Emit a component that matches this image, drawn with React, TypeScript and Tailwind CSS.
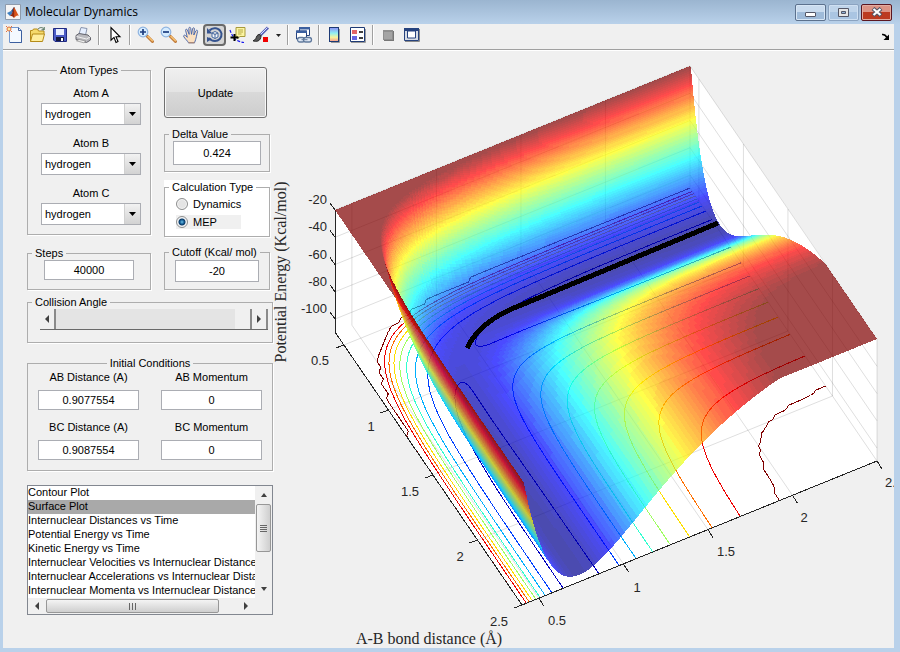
import type { ReactNode } from "react";

type Point = [number, number];

/* ---------- potential energy surface ---------- */

const R_MIN = 0.4;
const R_MAX = 2.5;
const V_MIN = -109.5;
const CUTOFF = -20;
const WELL = 104.5;
const SATO = 0.18;

// LEPS energy (kcal/mol) of the collinear H + H2 system
const energy = (a: number, b: number) => {
   const [p, q, r] = [a, b, a + b].map(dist => {
      const x = Math.exp(-1.96 * (dist - 0.738));
      const f = WELL / (4 * (1 + SATO));
      return {
         q: f * ((3 + SATO) * x * x - (2 + 6 * SATO) * x),
         j: f * ((1 + 3 * SATO) * x * x - (6 + 2 * SATO) * x),
      };
   });
   const exchange = Math.sqrt(
      0.5 * ((p.j - q.j) ** 2 + (q.j - r.j) ** 2 + (r.j - p.j) ** 2)
   );
   return Math.min(CUTOFF, p.q + q.q + r.q - exchange);
};

const project = (a: number, b: number, v: number): Point => {
   const s = (a - R_MIN) / (R_MAX - R_MIN);
   const t = (b - R_MIN) / (R_MAX - R_MIN);
   const h = (v - V_MIN) / (CUTOFF - V_MIN);
   return [335 + 187 * s + 355 * t, 332 + 273 * s - 144 * t - 122 * h];
};

const fmt = ([x, y]: Point) => `${x.toFixed(2)} ${y.toFixed(2)}`;

const jet = (v: number) => {
   const level = Math.max(0, Math.round(((v + WELL) / (CUTOFF + WELL)) * 63));
   const x = (level + 1) / 64;
   const channel = (center: number) =>
      Math.round(255 * Math.min(1, Math.max(0, 1.5 - Math.abs(4 * x - center))));
   return `rgb(${channel(3)},${channel(2)},${channel(1)})`;
};

const range = (from: number, to: number, count: number) =>
   Array.from({ length: count }, (_, i) => from + ((to - from) * i) / count);

interface Cell {
   d: string;
   fill: string;
   back: boolean;
}

const buildSurface = () => {
   // the repulsive walls are steep, so they get a finer mesh
   const grid = [
      ...range(R_MIN, 0.56, 80),
      ...range(0.56, 0.8, 40),
      ...range(0.8, R_MAX, 90),
      R_MAX,
   ];
   const v = grid.map(a => grid.map(b => energy(a, b)));
   const last = grid.length - 1;
   const cells: Cell[] = [];
   const at = (i: number, j: number) => project(grid[i], grid[j], v[i][j]);

   for (let i = 0; i < last; i++) {
      const color = (j: number) =>
         jet((v[i][j] + v[i + 1][j] + v[i][j - 1] + v[i + 1][j - 1]) / 4);
      // a cell seen from below has its winding reversed on screen
      const isBack = (j: number) => {
         const p = at(i, j);
         const q = at(i + 1, j - 1);
         const r = at(i, j - 1);
         const s = at(i + 1, j);
         return (q[0] - p[0]) * (s[1] - r[1]) - (q[1] - p[1]) * (s[0] - r[0]) > 0;
      };
      let j = last;
      while (j > 0) {
         const fill = color(j);
         const back = isBack(j);
         let k = j - 1;
         while (k > 0 && color(k) === fill && isBack(k) === back) k--;
         const top: string[] = [];
         const bottom: string[] = [];
         for (let m = j; m >= k; m--) {
            top.push(fmt(at(i, m)));
            bottom.unshift(fmt(at(i + 1, m)));
         }
         cells.push({ d: `M${[...top, ...bottom].join("L")}Z`, fill, back });
         j = k;
      }
   }
   return cells;
};

const buildContour = (level: number) => {
   const grid = [...range(R_MIN, R_MAX, 84), R_MAX];
   const v = grid.map(a => grid.map(b => energy(a, b)));
   let d = "";
   for (let i = 0; i < grid.length - 1; i++) {
      for (let j = 0; j < grid.length - 1; j++) {
         const corners = [
            [i, j],
            [i, j + 1],
            [i + 1, j + 1],
            [i + 1, j],
         ];
         const hits: Point[] = [];
         corners.forEach(([ci, cj], n) => {
            const [di, dj] = corners[(n + 1) % 4];
            const from = v[ci][cj];
            const to = v[di][dj];
            if (from > level === to > level) return;
            const t = (level - from) / (to - from);
            hits.push(
               project(
                  grid[ci] + (grid[di] - grid[ci]) * t,
                  grid[cj] + (grid[dj] - grid[cj]) * t,
                  V_MIN
               )
            );
         });
         for (let n = 0; n + 1 < hits.length; n += 2) {
            d += `M${fmt(hits[n])}L${fmt(hits[n + 1])}`;
         }
      }
   }
   return d;
};

const surface = buildSurface();
const layers = [surface.filter(c => !c.back), surface.filter(c => c.back)];
const contours = [-100, -90, -80, -70, -60, -50, -40, -30, -20].map(level => ({
   level,
   color: jet(level),
   d: buildContour(Math.min(level, -20.05)),
}));

const line = (from: Point, to: Point) => `M${fmt(from)}L${fmt(to)}`;

const ticks = [0.5, 1, 1.5, 2, 2.5];
const heights = [-20, -40, -60, -80, -100];

const gridPath = [
   ...ticks.flatMap(r => [
      line(project(R_MIN, r, V_MIN), project(R_MIN, r, CUTOFF)),
      line(project(R_MIN, r, V_MIN), project(R_MAX, r, V_MIN)),
      line(project(r, R_MAX, V_MIN), project(r, R_MAX, CUTOFF)),
      line(project(r, R_MIN, V_MIN), project(r, R_MAX, V_MIN)),
   ]),
   ...heights.flatMap(h => [
      line(project(R_MIN, R_MIN, h), project(R_MIN, R_MAX, h)),
      line(project(R_MIN, R_MAX, h), project(R_MAX, R_MAX, h)),
   ]),
].join("");

const tick = ([x, y]: Point, dx: number, dy: number) => line([x, y], [x + dx, y + dy]);

const axisPath = [
   "M335 210V332L522 605L877 461",
   ...ticks.map(r => tick(project(r, R_MIN, V_MIN), -8, 3)),
   ...ticks.map(r => tick(project(R_MAX, r, V_MIN), 5, 8)),
   ...heights.map(h => tick(project(R_MIN, R_MIN, h), -5, -7)),
].join("");

const axisLabels = [
   { text: "0.5", x: 320, y: 365 },
   { text: "1", x: 371, y: 431 },
   { text: "1.5", x: 410, y: 496 },
   { text: "2", x: 460, y: 561 },
   { text: "2.5", x: 499, y: 626 },
   { text: "0.5", x: 557, y: 625 },
   { text: "1", x: 637, y: 592 },
   { text: "1.5", x: 726, y: 556 },
   { text: "2", x: 804, y: 522 },
   { text: "2.5", x: 894, y: 487 },
];

const SurfacePlot = () => (
   <svg
      viewBox="273 51 621 597"
      className="block w-full"
      role="img"
      aria-label="Potential energy surface"
   >
      <path d="M335 210L690 66L877 338V461L522 605L335 332Z" fill="#fff" />
      <path d={gridPath} stroke="#000" strokeOpacity=".13" fill="none" />
      <g shapeRendering="crispEdges" fill="none">
         {contours.map(c => (
            <path key={c.level} d={c.d} stroke={c.color} />
         ))}
      </g>
      <path d={axisPath} stroke="#262626" fill="none" shapeRendering="crispEdges" />
      {layers.map((cells, n) => (
         <g key={n} shapeRendering="crispEdges" opacity=".7">
            {cells.map((cell, i) => (
               <path key={i} d={cell.d} fill={cell.fill} />
            ))}
         </g>
      ))}
      <path
         d="M718 223L560 289L514 308Q480 322 467 348"
         stroke="#000"
         strokeWidth="5"
         fill="none"
         shapeRendering="crispEdges"
      />
      <g fill="#262626" fontFamily="Liberation Sans, sans-serif" fontSize="13">
         {heights.map(h => (
            <text key={h} x="327" y={project(R_MIN, R_MIN, h)[1] - 6} textAnchor="end">
               {h}
            </text>
         ))}
         {axisLabels.map(l => (
            <text key={`${l.x}-${l.y}`} x={l.x} y={l.y} textAnchor="middle">
               {l.text}
            </text>
         ))}
      </g>
      <g fill="#262626" fontFamily="Liberation Serif, serif" fontSize="16" textAnchor="middle">
         <text transform="translate(286 272) rotate(-90)">Potential Energy (Kcal/mol)</text>
         <text x="429" y="644">
            A-B bond distance (Å)
         </text>
         <text x="697" y="662">
            B-C bond distance (Å)
         </text>
      </g>
   </svg>
);

/* ---------- toolbar ---------- */

const Icon = ({ children }: { children: ReactNode }) => (
   <svg viewBox="0 0 18 18" className="size-[18px]" aria-hidden="true">
      {children}
   </svg>
);

const Magnifier = ({ plus }: { plus?: boolean }) => (
   <Icon>
      <path d="M10 10L15.5 15.5" stroke="#c07a3a" strokeWidth="3" strokeLinecap="round" />
      <path d="M11 10.5L15.4 14.8" stroke="#f6c170" strokeWidth="1.5" strokeLinecap="round" />
      <circle cx="6" cy="6" r="4.8" fill="#d6ecff" stroke="#8fb4e0" strokeWidth="1.2" />
      <path d={plus ? "M3 6h6M6 3v6" : "M3 6h6"} stroke="#1c3d80" strokeWidth="1.7" />
   </Icon>
);

const icons: Record<string, ReactNode> = {
   "New Figure": (
      <Icon>
         <path d="M3.5 1.5h9l3 3v12h-12z" fill="#f4f9ff" stroke="#7397cf" />
         <path d="M12.5 1.5v3h3M15.5 5v11.5H4" fill="none" stroke="#3c5f9f" />
         <circle cx="3" cy="3" r="2" fill="#ffe9a0" stroke="#e2703a" />
         <path d="M0 0l1.3 1.3M6 0L4.7 1.3M0 6l1.3-1.3M6 6L4.7 4.7" stroke="#e2703a" />
      </Icon>
   ),
   "Open File": (
      <Icon>
         <path d="M1.5 15.5v-11h2l1-1.5h4l1 2h5.5v3" fill="#f5da6b" stroke="#b48a18" />
         <path d="M1.5 15.5l2-7.5h12l-2 7.5z" fill="#ffee9c" stroke="#b48a18" />
         <path d="M9 3.2c2-2.4 5-2 6 .3M15.2 1v2.8h-2.7" fill="none" stroke="#4b6b55" />
      </Icon>
   ),
   "Save Figure": (
      <Icon>
         <path d="M1.5 2.5h13v13H3L1.5 14z" fill="#4c5cc6" stroke="#202b82" />
         <path d="M4 3h8v6H4z" fill="#e9efff" />
         <path d="M4 11h8v4H4z" fill="#15193f" />
         <path d="M9 12h2v3H9z" fill="#fff" />
      </Icon>
   ),
   "Print Figure": (
      <Icon>
         <path d="M4 8L6 1.5l6 1L10.5 9z" fill="#e6efff" stroke="#8793ac" />
         <path d="M1 9.5l3-2 9 1.5 2.5 2.5v2.5l-4 2.5-10.5-3z" fill="#b9b9be" stroke="#65656d" />
         <path d="M1.5 10.5l10 2.5 3.5-2" fill="none" stroke="#efefef" />
         <path d="M4 13.5l7 1.6-2.5 1.6-7-1.9z" fill="#f3f3f3" stroke="#777" strokeWidth=".6" />
      </Icon>
   ),
   "Edit Plot": (
      <Icon>
         <path
            d="M5 1.5v12.7l3-2.8 2 5 2-.9-2-4.7h4z"
            fill="#fff"
            stroke="#000"
            strokeWidth="1.1"
         />
      </Icon>
   ),
   "Zoom In": <Magnifier plus />,
   "Zoom Out": <Magnifier />,
   Pan: (
      <Icon>
         <path
            d="M5.5 16.8c-1-2-3.5-4-4.8-6.3-.4-1.4 1-1.8 2-.8l1.6 1.6L2.6 4.4c-.2-1.3 1.2-1.7 1.8-.4L6.2 8.4l-.4-6c0-1.4 1.7-1.5 1.9-.1l.8 6 1.1-5.7c.4-1.3 2-.9 1.8.4l-.6 6 2.1-4.2c.7-1.2 2-.5 1.7.7-1 3-1.3 7.3-3.1 11.3z"
            fill="#fbe0c0"
            stroke="#3e5fa8"
            strokeWidth=".9"
         />
         <path d="M5.5 16.8h6" stroke="#b98763" />
      </Icon>
   ),
   "Rotate 3D": (
      <Icon>
         <path
            d="M3.5 4.5C6.5 1 13.5 1 15.5 7.5c.5 4.5-3 7.5-6.5 7.5-2.5 0-4.7-1-6-3"
            fill="none"
            stroke="#35538f"
            strokeWidth="2"
         />
         <path d="M1 2v5.5h5.5zM1 11v5l5-3z" fill="#35538f" />
         <path
            d="M6 7l3-1.5L12 7v4l-3 1.5L6 11zM6 7l3 1.5L12 7M9 8.5v4"
            fill="#f2f5fa"
            stroke="#46689f"
         />
      </Icon>
   ),
   "Data Cursor": (
      <Icon>
         <path d="M7 1.5h9v9h-5l-2.5 2v-2H7z" fill="#fbf4a1" stroke="#a79a3c" />
         <path d="M9 4h5M9 6h5M9 8h3.5" stroke="#b7a947" />
         <path
            d="M1 4c1 3 2 5 4 8 2 2.5 6 4 10 4.5"
            fill="none"
            stroke="#1818ef"
            strokeWidth="1.2"
            strokeDasharray="3 1.4"
         />
         <path d="M1.5 11.5h8M5.5 8v7" stroke="#000" strokeWidth="2" />
      </Icon>
   ),
   "Brush Data": (
      <Icon>
         <path d="M16 1.5L8 9.5" stroke="#5661b8" strokeWidth="3" />
         <path d="M15.5 1.5L8 9" stroke="#d8dcff" />
         <path
            d="M9 9.5c-1-1.5-3-1.2-4 .3-1 1.8-1 4-4 5 3 1.2 8 .8 8-5.3z"
            fill="#5b5b5b"
            stroke="#262626"
         />
         <path d="M11 11h5v5h-5z" fill="#f00000" />
      </Icon>
   ),
   "Link Plot": (
      <Icon>
         <path d="M4.5 1.5h10v8h-10z" fill="#fff" stroke="#27437e" />
         <path d="M4 1h11v2.5H4z" fill="#3b5f9f" />
         <path d="M1.5 5h10v8h-10z" fill="#fff" stroke="#27437e" />
         <path d="M1 4.5h11V7H1z" fill="#3b5f9f" />
         <rect x="2.5" y="11.5" width="7" height="4.5" rx="2.2" fill="#dfe8f4" stroke="#60799c" strokeWidth="1.3" />
         <rect x="8.5" y="11.5" width="8" height="4.5" rx="2.2" fill="#dfe8f4" stroke="#60799c" strokeWidth="1.3" />
         <path d="M6.5 13.7h6" stroke="#60799c" />
      </Icon>
   ),
   "Insert Colorbar": (
      <Icon>
         <defs>
            <linearGradient id="bar" x1="0" y1="0" x2="0" y2="1">
               <stop offset="0" stopColor="#8c8cf5" />
               <stop offset=".4" stopColor="#8eeef2" />
               <stop offset=".7" stopColor="#f7f49c" />
               <stop offset="1" stopColor="#f69a8e" />
            </linearGradient>
         </defs>
         <path d="M5 16.5h8.5V3" fill="none" stroke="#9b9b9b" />
         <rect x="3.5" y="1.5" width="9" height="14" fill="url(#bar)" stroke="#1d3a75" />
      </Icon>
   ),
   "Insert Legend": (
      <Icon>
         <path d="M2 16.5h14.5V3" fill="none" stroke="#9b9b9b" />
         <path d="M1.5 1.5h14v14h-14z" fill="#fff" stroke="#1d3a75" />
         <path d="M3 4h5v4H3z" fill="#e36666" />
         <path d="M3 10h5v4H3z" fill="#6666e3" />
         <path d="M10 6h4M10 12h4" stroke="#000" strokeWidth="1.4" />
      </Icon>
   ),
   "Hide Plot Tools": (
      <Icon>
         <path d="M4 5h10v10H4z" fill="#777" />
         <path d="M3 4h10v10H3z" fill="#8f8f8f" />
         <path d="M4 6h8v7H4z" fill="#a4a4a4" />
      </Icon>
   ),
   "Show Plot Tools": (
      <Icon>
         <path d="M2 15.5h14.5V3" fill="none" stroke="#8a8a8a" />
         <path d="M1.5 2.5h14v12h-14z" fill="#d7dce4" stroke="#27437e" />
         <path d="M1 2h15v3H1z" fill="#27437e" />
         <path d="M4.5 5h8v7h-8z" fill="#fff" stroke="#27437e" />
      </Icon>
   ),
};

const toolGroups = [
   ["New Figure", "Open File", "Save Figure", "Print Figure"],
   ["Edit Plot"],
   ["Zoom In", "Zoom Out", "Pan", "Rotate 3D", "Data Cursor", "Brush Data"],
   ["Link Plot"],
   ["Insert Colorbar", "Insert Legend"],
   ["Hide Plot Tools", "Show Plot Tools"],
];

const Toolbar = () => (
   <div className="flex h-[27px] items-center border-b border-white bg-[#f0f0f0] shadow-[inset_0_-1px_0_#a0a0a0]">
      {toolGroups.map((group, i) => (
         <div key={group[0]} className="flex items-center pb-1">
            {i > 0 && <span className="mx-[3px] h-5 w-[2px] border-r border-white bg-[#a0a0a0]" />}
            {group.map(name => (
               <button
                  key={name}
                  type="button"
                  aria-label={name}
                  className={
                     name === "Rotate 3D"
                        ? "flex h-[22px] w-[23px] items-center justify-center rounded-[4px] border-2 border-[#6a6a6a] bg-[#d4d4d4]"
                        : "flex h-[22px] w-[23px] items-center justify-center"
                  }
               >
                  {icons[name]}
               </button>
            ))}
            {group.includes("Brush Data") && (
               <button type="button" aria-label="Brush options" className="flex w-3 justify-center">
                  <svg viewBox="0 0 5 3" className="h-[3px] w-[5px]">
                     <path d="M0 0h5L2.5 3z" fill="#222" />
                  </svg>
               </button>
            )}
         </div>
      ))}
      <button type="button" aria-label="Dock figure" className="mr-1 ml-auto">
         <svg viewBox="0 0 8 8" className="size-2">
            <path d="M0 1.5Q3 1 5 4.5" stroke="#000" strokeWidth="1.6" fill="none" />
            <path d="M7 1.5V7H1.5z" fill="#000" />
         </svg>
      </button>
   </div>
);

/* ---------- title bar ---------- */

const TitleBar = () => (
   <header className="flex h-6 items-center bg-linear-to-b from-[#9bb5d0] to-[#b9d1ea] pr-2 pl-[5px]">
      <svg viewBox="0 0 16 16" className="size-4" aria-hidden="true">
         <path d="M.5.5h15v15H.5z" fill="#f5f5f5" stroke="#8e9bab" />
         <path d="M2 9l4-2 2 2-3 3z" fill="#3d7fc0" />
         <path d="M6 7l3-4 1 1-2 5z" fill="#2b4f84" />
         <path d="M9 3c2 3 3 6 5 9-2-1-3 0-5 2-1-2-2-2-4-2 3-2 3-6 4-9z" fill="#d95319" />
         <path d="M9 3c0 4 .5 7 0 11-1-2-2-2-4-2 3-2 3-6 4-9z" fill="#8c2a14" />
      </svg>
      <h1 className="ml-1 font-['Open_Sans',sans-serif] text-[12px] leading-[18px] text-black">
         Molecular Dynamics
      </h1>
      <div className="ml-auto flex gap-[2px]">
         <button
            type="button"
            aria-label="Minimize"
            className="flex h-[17px] w-[31px] items-center justify-center rounded-[2px] border border-[#5c718d] bg-linear-to-b from-[#c9dbee] from-50% to-[#9fbbd9] to-50% shadow-[inset_0_0_0_1px_#d7e6f5]"
         >
            <span className="mt-1 h-[5px] w-[11px] rounded-[1px] border border-[#535666] bg-white" />
         </button>
         <button
            type="button"
            aria-label="Maximize"
            className="flex h-[17px] w-[31px] items-center justify-center rounded-[2px] border border-[#8ba3c0] bg-linear-to-b from-[#bfd4ea] from-50% to-[#aac5e2] to-50% shadow-[inset_0_0_0_1px_#cfe0f2]"
         >
            <svg viewBox="0 0 11 9" className="h-[9px] w-[11px]">
               <path d="M.5.5h10v8H.5z" fill="#e6e6e6" stroke="#535666" />
               <path d="M3.5 3.5h4v2h-4z" fill="#8fb1d6" stroke="#535666" />
            </svg>
         </button>
         <button
            type="button"
            aria-label="Close"
            className="flex h-[17px] w-[31px] items-center justify-center rounded-[2px] border border-[#5b1620] bg-linear-to-b from-[#dc9384] from-50% to-[#bc3a20] to-50% shadow-[inset_0_0_0_1px_#e3aca0]"
         >
            <svg viewBox="0 0 12 10" className="h-[10px] w-3">
               <path d="M2 1.5L10 8.5M10 1.5L2 8.5" stroke="#535666" strokeWidth="4.2" />
               <path d="M2.5 2L9.5 8M9.5 2L2.5 8" stroke="#fff" strokeWidth="2.2" />
            </svg>
         </button>
      </div>
   </header>
);

/* ---------- controls ---------- */

interface PanelProps {
   title: string;
   centered?: boolean;
   className?: string;
   bodyClass: string;
   children: ReactNode;
}

const Panel = ({ title, centered, className = "", bodyClass, children }: PanelProps) => (
   <fieldset className={`border border-[#adadad] shadow-[1px_1px_0_#fff] ${className}`}>
      <legend
         className={
            centered ? "mx-auto px-[3px] whitespace-nowrap" : "ml-1 px-[3px] whitespace-nowrap"
         }
      >
         {title}
      </legend>
      <div className={bodyClass}>{children}</div>
   </fieldset>
);

const inputClass = "block border border-[#abadb3] bg-white text-center outline-none";

const atoms = ["Atom A", "Atom B", "Atom C"];

const AtomSelect = ({ label }: { label: string }) => (
   <label className="flex w-[100px] flex-col items-center gap-[3px]">
      {label}
      <span className="relative block w-full">
         <select className="block h-[22px] w-full appearance-none border border-[#abadb3] bg-white pl-[3px] outline-none">
            <option>hydrogen</option>
            <option>deuterium</option>
            <option>chlorine</option>
         </select>
         <span className="pointer-events-none absolute inset-y-px right-px flex w-4 items-center justify-center border-l border-[#d0d0d0] bg-linear-to-b from-[#f2f2f2] to-[#d2d2d2]">
            <svg viewBox="0 0 7 4" className="h-1 w-[7px]">
               <path d="M0 0h7L3.5 4z" fill="#000" />
            </svg>
         </span>
      </span>
   </label>
);

const conditions = [
   { label: "AB Distance (A)", value: "0.9077554" },
   { label: "AB Momentum", value: "0" },
   { label: "BC Distance (A)", value: "0.9087554" },
   { label: "BC Momentum", value: "0" },
];

const plots = [
   "Contour Plot",
   "Surface Plot",
   "Internuclear Distances vs Time",
   "Potential Energy vs Time",
   "Kinetic Energy vs Time",
   "Internuclear Velocities vs Internuclear Distance",
   "Internuclear Accelerations vs Internuclear Distance",
   "Internuclear Momenta vs Internuclear Distance",
];

const arrowPaths = {
   left: "M6 0v8L2 4z",
   right: "M2 0v8l4-4z",
   up: "M1 6h6L4 2z",
   down: "M1 2h6L4 6z",
};

const Arrow = ({ to }: { to: keyof typeof arrowPaths }) => (
   <svg viewBox="0 0 8 8" className="size-2" aria-hidden="true">
      <path d={arrowPaths[to]} fill="#404040" />
   </svg>
);

const radioClass =
   "size-3 appearance-none rounded-full border border-[#8e8f8f] bg-[#e4e4e4] shadow-[inset_0_0_0_1px_#f6f6f6] checked:bg-[radial-gradient(circle,#6fc3ea_0,#155f96_2px,#0c3a66_3px,#e8eef4_4px)]";

const PlotList = () => (
   <div className="mt-[14px] w-[246px] border border-[#828790] bg-white">
      <div className="flex">
         <select
            size={8}
            defaultValue="Surface Plot"
            aria-label="Plot type"
            className="block h-28 min-w-0 flex-1 appearance-none overflow-hidden outline-none"
         >
            {plots.map(plot => (
               <option
                  key={plot}
                  className="block h-[14px] min-h-0 overflow-hidden p-0 leading-[17px] checked:bg-[linear-gradient(#a9a9a9,#a9a9a9)] checked:text-black"
               >
                  {plot}
               </option>
            ))}
         </select>
         <div className="flex w-[17px] flex-col items-center bg-[#f0f0f0]">
            <button type="button" aria-label="Scroll up" className="flex h-[18px] items-center">
               <Arrow to="up" />
            </button>
            <span className="flex h-12 w-[15px] flex-col items-center justify-center gap-px rounded-[2px] border border-[#979797] bg-linear-to-r from-[#f4f4f4] to-[#cfcfcf]">
               <span className="h-px w-[7px] bg-[#666]" />
               <span className="h-px w-[7px] bg-[#666]" />
               <span className="h-px w-[7px] bg-[#666]" />
               <span className="h-px w-[7px] bg-[#666]" />
            </span>
            <button
               type="button"
               aria-label="Scroll down"
               className="mt-auto flex h-[18px] items-center"
            >
               <Arrow to="down" />
            </button>
         </div>
      </div>
      <div className="flex h-4 items-center bg-[#f0f0f0] pr-[17px]">
         <button type="button" aria-label="Scroll left" className="flex w-[18px] justify-center">
            <Arrow to="left" />
         </button>
         <span className="flex h-[14px] w-[173px] items-center justify-center gap-[2px] rounded-[2px] border border-[#979797] bg-linear-to-b from-[#f4f4f4] to-[#cfcfcf]">
            <span className="h-[7px] w-px bg-[#666]" />
            <span className="h-[7px] w-px bg-[#666]" />
            <span className="h-[7px] w-px bg-[#666]" />
         </span>
         <button type="button" aria-label="Scroll right" className="ml-auto flex w-[18px] justify-center">
            <Arrow to="right" />
         </button>
      </div>
   </div>
);

const sliderButton =
   "flex w-4 items-center justify-center border-r-2 border-[#8a8a8a] bg-[#f0f0f0]";

const Controls = () => (
   <aside className="w-[270px] shrink-0 pt-3 pl-6">
      <div className="flex items-start gap-[13px]">
         <div className="w-[124px]">
            <Panel title="Atom Types" centered bodyClass="pt-[9px] pb-[9px] pl-1">
               <div className="flex flex-col items-center gap-[11px]">
                  {atoms.map(atom => (
                     <AtomSelect key={atom} label={atom} />
                  ))}
               </div>
            </Panel>
            <Panel title="Steps" className="mt-[11px]" bodyClass="px-4 pb-[9px]">
               <input
                  aria-label="Steps"
                  defaultValue="40000"
                  className={`h-5 w-full ${inputClass}`}
               />
            </Panel>
         </div>
         <div className="w-[106px]">
            <button
               type="button"
               className="mt-1 block h-[51px] w-[103px] rounded-[3px] border border-[#707070] bg-[linear-gradient(#f0f0f0,#e4e4e4_48%,#d9d9d9_50%,#cdcdcd)] shadow-[inset_0_0_0_1px_#f8f8f8]"
            >
               Update
            </button>
            <Panel title="Delta Value" className="mt-[9px]" bodyClass="px-2 pb-[6px]">
               <input
                  aria-label="Delta Value"
                  defaultValue="0.424"
                  className={`h-6 w-full ${inputClass}`}
               />
            </Panel>
            <div className="mt-2 bg-white">
               <Panel title="Calculation Type" bodyClass="pt-[3px] pb-[7px] pl-[11px]">
                  <div className="flex flex-col gap-1">
                     <label className="flex h-[14px] items-center gap-[5px]">
                        <input type="radio" name="calculation" className={radioClass} />
                        Dynamics
                     </label>
                     <label className="flex h-[14px] w-[65px] items-center gap-[5px] bg-[#f0f0f0]">
                        <input
                           type="radio"
                           name="calculation"
                           defaultChecked
                           className={radioClass}
                        />
                        MEP
                     </label>
                  </div>
               </Panel>
            </div>
            <Panel title="Cutoff (Kcal/ mol)" className="mt-2" bodyClass="px-[10px] pt-px pb-[7px]">
               <input
                  aria-label="Cutoff (Kcal/ mol)"
                  defaultValue="-20"
                  className={`h-[22px] w-full ${inputClass}`}
               />
            </Panel>
         </div>
      </div>

      <Panel title="Collision Angle" className="mt-[5px] w-[246px]" bodyClass="pr-1 pb-3 pl-3">
         <div className="flex h-[21px] border-b border-[#696969]">
            <button type="button" aria-label="Decrease angle" className={sliderButton}>
               <Arrow to="left" />
            </button>
            <input
               type="range"
               aria-label="Collision Angle"
               min={0}
               max={180}
               defaultValue={180}
               className="h-full min-w-0 flex-1 appearance-none bg-[#e4e4e4] outline-none [&::-webkit-slider-thumb]:h-5 [&::-webkit-slider-thumb]:w-[17px] [&::-webkit-slider-thumb]:appearance-none [&::-webkit-slider-thumb]:border-r-2 [&::-webkit-slider-thumb]:border-[#8a8a8a] [&::-webkit-slider-thumb]:bg-[#f0f0f0]"
            />
            <button type="button" aria-label="Increase angle" className={sliderButton}>
               <Arrow to="right" />
            </button>
         </div>
      </Panel>

      <Panel
         title="Initial Conditions"
         centered
         className="mt-[13px] w-[246px]"
         bodyClass="px-[10px] pb-[10px]"
      >
         <div className="grid grid-cols-2 gap-x-[22px] gap-y-[10px]">
            {conditions.map(c => (
               <label key={c.label} className="flex flex-col items-center gap-[6px]">
                  {c.label}
                  <input defaultValue={c.value} className={`h-5 w-full ${inputClass}`} />
               </label>
            ))}
         </div>
      </Panel>

      <PlotList />
   </aside>
);

const App = () => (
   <div className="min-h-screen bg-[#b9d1ea] pb-1 font-['Liberation_Sans',sans-serif] text-[11px] leading-[14px] text-black">
      <TitleBar />
      <div className="mr-[6px] ml-[3px] bg-[#f0f0f0]">
         <Toolbar />
         <main className="flex items-start">
            <Controls />
            <div className="min-w-0 flex-1">
               <SurfacePlot />
            </div>
         </main>
      </div>
   </div>
);

export default App;
